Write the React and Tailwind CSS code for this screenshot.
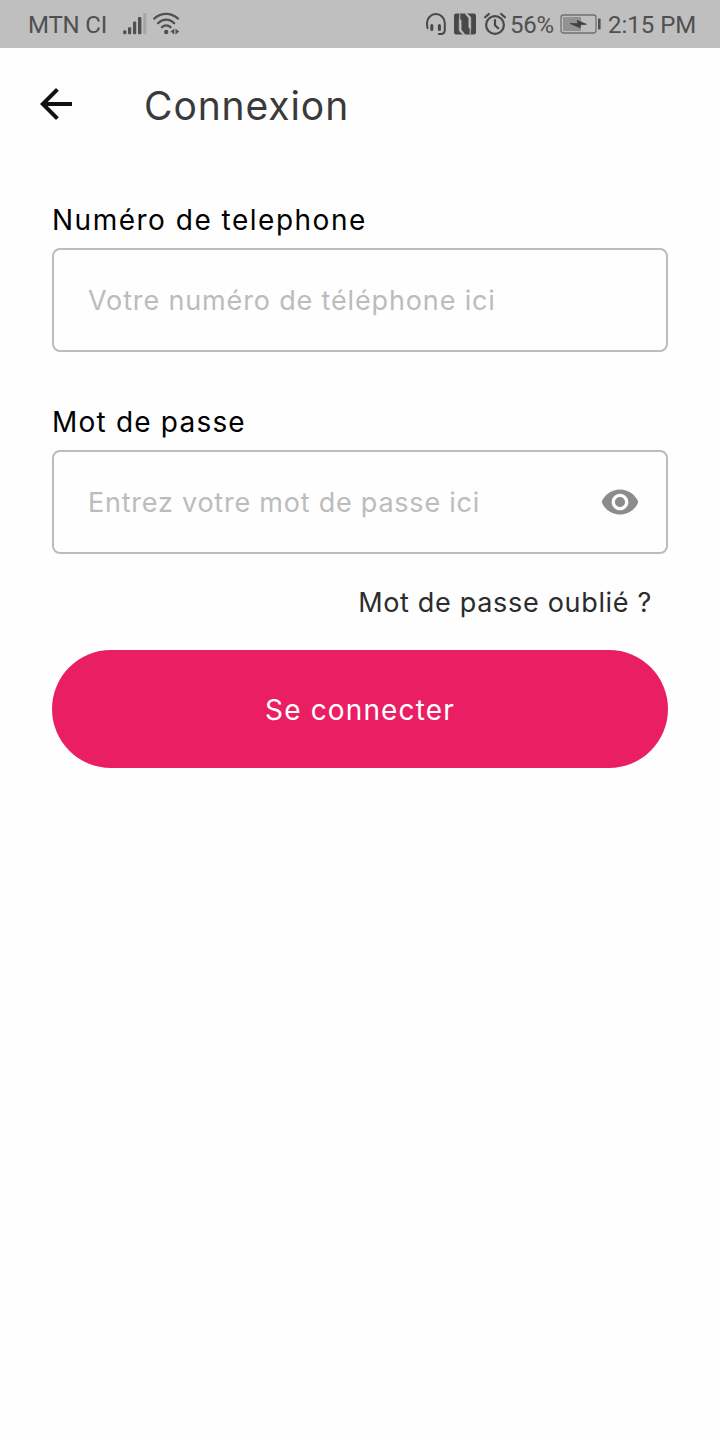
import React from "react";
import { MdArrowBack, MdVisibility } from "react-icons/md";

function SignalIcon() {
  return (
    <svg className="ml-[16px] h-6 w-6 shrink-0" viewBox="0 0 24 24" fill="#505050">
      <rect x="0.2" y="18.2" width="3.2" height="4" rx="1.3" />
      <rect x="5" y="15.2" width="3.2" height="7" rx="1" />
      <rect x="10" y="9.4" width="3.2" height="12.8" rx="1" />
      <rect x="15" y="5" width="3.4" height="17.2" rx="1" />
      <rect x="20.3" y="1" width="3" height="21.2" rx="1" fill="#a6a6a6" />
    </svg>
  );
}

function WifiIcon() {
  return (
    <svg className="ml-[6px] h-6 w-7 shrink-0" viewBox="0 0 28 24" fill="none" stroke="#505050" strokeWidth="2.2" strokeLinecap="round">
      <path d="M1.2 6.6C8.2.2 18 .2 25 6.6" />
      <path d="M5 11.2C9.8 6.4 16.5 6.4 21.2 11.2" />
      <path d="M8.8 15.3C11.3 12.6 15 12.6 17.6 15.3" />
      <circle cx="13.2" cy="20" r="2.2" fill="#505050" stroke="none" />
      <path d="M21.3 16.8v5.6l-3.8-2.8zM22.5 16.8v5.6l3.8-2.8z" fill="#505050" stroke="none" />
    </svg>
  );
}

function HeadsetIcon() {
  return (
    <svg className="h-6 w-5 shrink-0" viewBox="0 0 20 24" fill="none" stroke="#484848" strokeWidth="2" strokeLinecap="round">
      <path d="M1.6 16.2C1 14.5 1 13 1 11a8.8 8.8 0 0 1 17.8 0v7c0 2.8-1.2 4-4 4h-2" />
      <path d="M5.8 13.6v4M13.4 13.6v4" strokeWidth="3" />
    </svg>
  );
}

function NfcIcon() {
  return (
    <svg className="ml-2 h-6 w-[22px] shrink-0" viewBox="0 0 22 24">
      <rect x="0" y="1.5" width="22" height="21" rx="2" fill="#484848" />
      <path d="M5.2 6.5L7.2 8.4V17.8L11 22.5H9L5.2 18.8Z" fill="#bfbfbf" stroke="#bfbfbf" strokeWidth="0.5" />
      <path d="M16.8 17.5L14.8 15.6V6.2L11 1.5H13L16.8 5.2Z" fill="#bfbfbf" stroke="#bfbfbf" strokeWidth="0.5" />
      <path d="M5.8 7V1.5M16.2 17V22.5" stroke="#bfbfbf" strokeWidth="1" />
    </svg>
  );
}

function AlarmIcon() {
  return (
    <svg className="ml-2 h-6 w-[22px] shrink-0" viewBox="0 0 22 24" fill="none" stroke="#484848" strokeWidth="2.2" strokeLinecap="round">
      <circle cx="11" cy="13" r="8.9" />
      <path d="M11 8v5.3l3.2 3M1.1 5.3L4.8 2M20.9 5.3L17.2 2" />
    </svg>
  );
}

function BatteryIcon() {
  return (
    <svg className="ml-[6px] h-6 w-[42px] shrink-0" viewBox="0 0 42 24">
      <rect x="1" y="3" width="35" height="18" rx="2.5" fill="none" stroke="#707070" strokeWidth="1.3" />
      <rect x="3" y="5" width="18" height="14" fill="#929292" />
      <path d="M10.3 11.5L18 11.7L17.2 8.4L26.3 12.3L20 12.8L20.3 15.8Z" fill="#404040" stroke="#404040" strokeWidth="0.8" />
      <rect x="38" y="6.5" width="2.6" height="11" rx="0.8" fill="#505050" />
    </svg>
  );
}

function StatusBar() {
  return (
    <div className="flex h-12 items-center bg-[#bfbfbf] pl-7 pr-6 font-['Roboto',sans-serif] text-2xl font-normal text-[#505050]">
      <span className="w-[79px] whitespace-nowrap pt-[2px] tracking-[-0.2px]">MTN CI</span>
      <SignalIcon />
      <WifiIcon />
      <div className="ml-auto flex items-center">
        <HeadsetIcon />
        <NfcIcon />
        <AlarmIcon />
        <span className="ml-1 w-[44px] whitespace-nowrap pt-[2px] tracking-[-0.3px]">56%</span>
        <BatteryIcon />
        <span className="ml-[6px] w-[88px] whitespace-nowrap pt-[2px]">2:15 PM</span>
      </div>
    </div>
  );
}

function Field({ label, labelClass, hint, hintClass, children }) {
  return (
    <div>
      <div className={"flex h-10 items-center whitespace-nowrap pt-0.5 text-[28px] text-black " + labelClass}>{label}</div>
      <div className="mt-[9px] flex h-[104px] items-center justify-between rounded-lg border-2 border-[#bcbcbc] pl-[34px] pr-[26px]">
        <span className={"whitespace-nowrap pt-0.5 text-[27px] text-[#bcbcbc] " + hintClass}>{hint}</span>
        {children}
      </div>
    </div>
  );
}

export default function App() {
  return (
    <div className="min-h-[1440px] w-full bg-[#fefefe] font-['Inter',sans-serif] font-normal">
      <StatusBar />
      <header className="flex h-28 items-center pl-8">
        <MdArrowBack className="size-12 text-[#111]" />
        <h1 className="ml-[64px] pt-1 text-[39px] tracking-[0.9px] text-[#3a3a3a]">Connexion</h1>
      </header>
      <main className="px-[52px] pt-[39px]">
        <Field
          label="Numéro de telephone"
          labelClass="tracking-[1.5px]"
          hint="Votre numéro de téléphone ici"
          hintClass="tracking-[0.85px]"
        />
        <div className="mt-[49px]">
          <Field
            label="Mot de passe"
            labelClass="tracking-[1.2px]"
            hint="Entrez votre mot de passe ici"
            hintClass="tracking-[0.77px]"
          >
            <MdVisibility className="size-10 text-[#8c8c8c]" />
          </Field>
        </div>
        <div className="mt-7 flex h-10 items-center justify-end pr-4 pt-0.5 text-[27px] tracking-[0.68px] text-[#2c2c2c]">
          Mot de passe oublié ?
        </div>
        <button className="mt-7 flex h-[118px] w-full items-center justify-center rounded-full bg-[#ea1e63] pt-0.5 text-[28px] tracking-[1.15px] text-white">
          Se connecter
        </button>
      </main>
    </div>
  );
}
